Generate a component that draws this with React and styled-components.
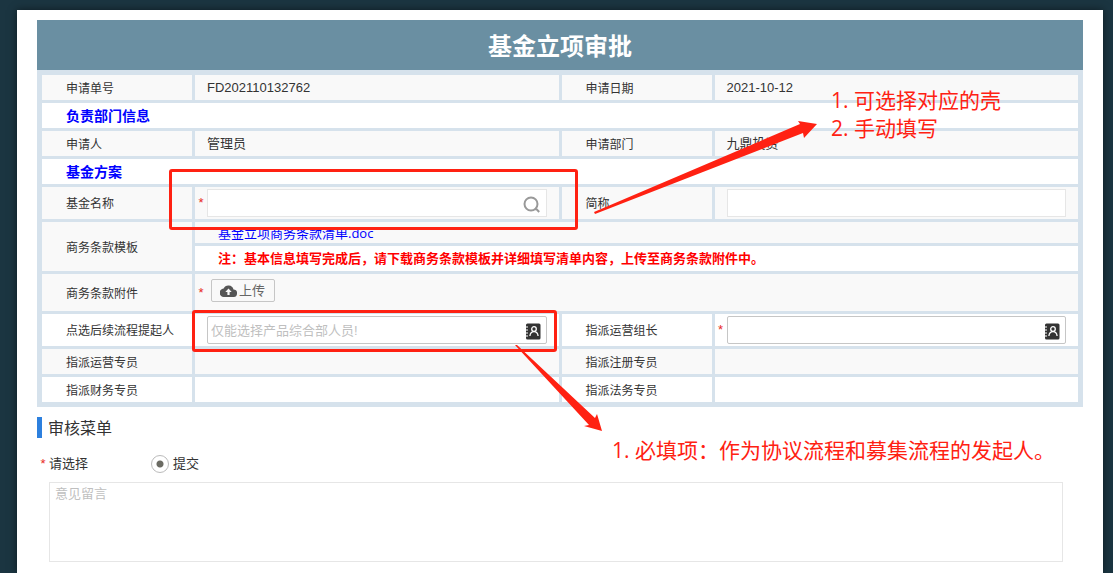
import styled, { createGlobalStyle } from 'styled-components'

const cjk = `'Noto Sans CJK SC', sans-serif`
const line = '#d6e2ec'
const mark = '#ff2112'

const GlobalStyle = createGlobalStyle`
  * {
    box-sizing: border-box;
  }
  body {
    margin: 0;
    background: #1b3541;
    color: #333;
    font: 13px/20px 'Liberation Sans', ${cjk};
  }
  input, textarea, button {
    font: inherit;
    color: inherit;
  }
`

const Shell = styled.div`
  padding: 10px 10px 0 17px;
  overflow: hidden;
`

const Sheet = styled.main`
  position: relative;
  min-height: calc(100vh - 10px);
  padding: 10px 20px;
  background: #fff;
  box-shadow: 0 0 8px rgba(0, 0, 0, 0.5);
`

const Title = styled.h1`
  margin: 0;
  padding: 7px 0;
  background: #6a8fa2;
  color: #fff;
  font: bold 24px/36px ${cjk};
  text-align: center;
`

const Form = styled.div`
  display: grid;
  grid-template-columns: 150px 1fr 150px 1fr;
  gap: 3px;
  padding: 5px;
  background: ${line};
`

const Cell = styled.div`
  display: flex;
  align-items: center;
  min-width: 0;
  min-height: ${(p) => p.$height || 25}px;
  grid-column: ${(p) => (p.$wide ? 'span 3' : 'auto')};
  background: ${(p) => (p.$plain ? '#fff' : '#f9f9f9')};
`

const Label = styled(Cell).attrs({ as: 'label' })`
  padding: 2px 0 0 24px;
  font-size: 12px;
  grid-row: ${(p) => (p.$tall ? 'span 2' : 'auto')};
`

const Value = styled(Cell)`
  padding-left: 12px;
`

const Section = styled.h2`
  grid-column: 1 / -1;
  margin: 0;
  padding-left: 24px;
  background: #fff;
  color: #00f;
  font: bold 14px/24px ${cjk};
  min-height: 25px;
`

const FileCell = styled(Cell)`
  padding-left: 23px;
`

const FileLink = styled.a`
  color: #00f;
  font: 13px/20px 'Open Sans', ${cjk};
  text-decoration: none;
`

const Note = styled.strong`
  color: #f00;
`

const Star = styled.span`
  flex: none;
  width: 12px;
  color: #e8281e;
  text-align: center;
`

const Field = styled(Cell)`
  padding-right: 12px;
`

const Box = styled.div`
  display: flex;
  align-items: center;
  flex: 1;
  min-width: 0;
  height: 28px;
  padding-right: 5px;
  background: #fff;
  border: 1px solid ${(p) => (p.$strong ? '#c6c6c6' : '#e6e6e6')};
  border-radius: ${(p) => (p.$strong ? 2 : 0)}px;
`

const TextInput = styled.input`
  flex: 1;
  min-width: 0;
  height: 26px;
  padding: 0 3px;
  border: 0;
  outline: 0;
  background: none;

  &::placeholder {
    color: #bfbfbf;
  }
`

const IconButton = styled.button`
  display: flex;
  padding: 3px 0 0;
  border: 0;
  background: none;
`

const Upload = styled.button`
  display: flex;
  align-items: center;
  gap: 2px;
  height: 23px;
  margin: 0 4px 4px;
  padding: 0 9px 0 8px;
  background: #f9f9f9;
  border: 1px solid #c6c6c6;
  border-radius: 2px;
  color: #666;
`

const MenuTitle = styled.h2`
  margin: 10px 0 16px;
  padding-left: 6px;
  border-left: 5px solid #2d80de;
  font: 16px/21px ${cjk};
`

const Choice = styled.fieldset`
  display: flex;
  align-items: center;
  margin: 0;
  padding: 0;
  border: 0;
`

const ChoiceName = styled.span`
  width: 101px;
`

const Radio = styled.input`
  appearance: none;
  width: 18px;
  height: 18px;
  margin: 0 4px 0 1px;
  border: 1px solid #bbb;
  border-radius: 50%;

  &:checked {
    background: radial-gradient(circle, #6b6b63 3px, #fff 4px);
  }
`

const Comment = styled.textarea`
  display: block;
  width: calc(100% - 32px);
  height: 80px;
  margin: 8px 20px 0 12px;
  padding: 1px 5px;
  border: 1px solid #e6e6e6;
  resize: none;

  &::placeholder {
    color: #bfbfbf;
  }
`

// red marks drawn over the form
const Frame = styled.div`
  position: absolute;
  left: ${(p) => p.$x}px;
  top: ${(p) => p.$y}px;
  width: ${(p) => p.$w}px;
  height: ${(p) => p.$h}px;
  border: 3px solid ${mark};
  border-radius: 3px;
  pointer-events: none;
`

const Arrows = styled.svg`
  position: absolute;
  left: 0;
  top: 0;
  fill: ${mark};
  pointer-events: none;
`

const Remark = styled.div`
  position: absolute;
  left: ${(p) => p.$x}px;
  top: ${(p) => p.$y}px;
  color: ${mark};
  font: 21px/28px 'Open Sans', ${cjk};
  white-space: nowrap;
  pointer-events: none;
`

const SearchIcon = () => (
  <svg width="18" height="18" viewBox="0 0 18 18" fill="none" stroke="#999" strokeWidth="2">
    <circle cx="8" cy="8" r="6.5" />
    <path d="M12 13.2h1.6l2.6 2.8" />
  </svg>
)

const ContactIcon = () => (
  <svg width="16" height="17" viewBox="0 0 16 17">
    <rect x="1" y="0.5" width="14.5" height="16" rx="1.5" fill="#333" />
    <path d="M0 4h3M0 7h3M0 10h3M0 13h3" stroke="#fff" strokeWidth="1.2" />
    <g fill="none" stroke="#fff" strokeWidth="1.3">
      <circle cx="9" cy="6" r="2.3" />
      <path d="M4.9 13c.3-2.7 1.8-4.3 4.1-4.3s3.8 1.6 4.1 4.3" />
    </g>
  </svg>
)

const CloudIcon = () => (
  <svg width="17" height="12" viewBox="0 0 17 12">
    <path
      d="M13.5 4.4A5.3 5.3 0 0 0 3.6 3.5 4.25 4.25 0 0 0 4.2 12H13a3.8 3.8 0 0 0 .5-7.6z"
      fill="#555"
    />
    <path d="M8.5 3.5l3.2 3.4H9.6v3H7.4v-3H5.3z" fill="#f9f9f9" />
  </svg>
)

const PersonField = ({ id, required, placeholder }) => (
  <Field $plain $height={32}>
    <Star>{required && '*'}</Star>
    <Box $strong>
      <TextInput id={id} placeholder={placeholder} />
      <IconButton type="button" aria-label="选择人员">
        <ContactIcon />
      </IconButton>
    </Box>
  </Field>
)

const App = () => {
  return (
    <Shell>
      <GlobalStyle />
      <Sheet>
        <Title>基金立项审批</Title>
        <Form>
          <Label as="div">申请单号</Label>
          <Value>FD202110132762</Value>
          <Label as="div">申请日期</Label>
          <Value>2021-10-12</Value>

          <Section>负责部门信息</Section>
          <Label as="div">申请人</Label>
          <Value>管理员</Value>
          <Label as="div">申请部门</Label>
          <Value>九鼎投资</Value>

          <Section>基金方案</Section>
          <Label htmlFor="fundName">基金名称</Label>
          <Field $height={32}>
            <Star>*</Star>
            <Box>
              <TextInput id="fundName" />
              <IconButton type="button" aria-label="搜索">
                <SearchIcon />
              </IconButton>
            </Box>
          </Field>
          <Label htmlFor="shortName">简称</Label>
          <Field $height={32}>
            <Star />
            <Box>
              <TextInput id="shortName" />
            </Box>
          </Field>

          <Label as="div" $tall>
            商务条款模板
          </Label>
          <FileCell $wide $height={21}>
            <FileLink href="#">基金立项商务条款清单.doc</FileLink>
          </FileCell>
          <FileCell $wide $plain>
            <Note>注：基本信息填写完成后，请下载商务条款模板并详细填写清单内容，上传至商务条款附件中。</Note>
          </FileCell>

          <Label htmlFor="upload">商务条款附件</Label>
          <Cell $wide $height={37}>
            <Star>*</Star>
            <Upload id="upload" type="button">
              <CloudIcon />
              上传
            </Upload>
          </Cell>

          <Label htmlFor="starter" $plain>
            点选后续流程提起人
          </Label>
          <PersonField id="starter" placeholder="仅能选择产品综合部人员!" />
          <Label htmlFor="leader" $plain>
            指派运营组长
          </Label>
          <PersonField id="leader" required />

          <Label as="div">指派运营专员</Label>
          <Value />
          <Label as="div">指派注册专员</Label>
          <Value />
          <Label as="div" $plain>
            指派财务专员
          </Label>
          <Value $plain />
          <Label as="div" $plain>
            指派法务专员
          </Label>
          <Value $plain />
        </Form>

        <MenuTitle>审核菜单</MenuTitle>
        <Choice>
          <Star>*</Star>
          <ChoiceName>请选择</ChoiceName>
          <Radio type="radio" id="submit" name="action" defaultChecked />
          <label htmlFor="submit">提交</label>
        </Choice>
        <Comment placeholder="意见留言" aria-label="意见留言" />

        <Frame $x={152} $y={159} $w={409} $h={61} />
        <Frame $x={175} $y={300} $w={365} $h={42} />
        <Arrows width="820" height="440">
          <path d="M577 202L783 114l-2-3 19 3-13 14-1-5L578 204z" />
          <path d="M498 335L500 335 578 408l2-4 5 17-18-5 5-1z" />
        </Arrows>
        <Remark $x={814} $y={76}>
          1. 可选择对应的壳
          <br />
          2. 手动填写
        </Remark>
        <Remark $x={595} $y={426}>
          1. 必填项：作为协议流程和募集流程的发起人。
        </Remark>
      </Sheet>
    </Shell>
  )
}

export default App
